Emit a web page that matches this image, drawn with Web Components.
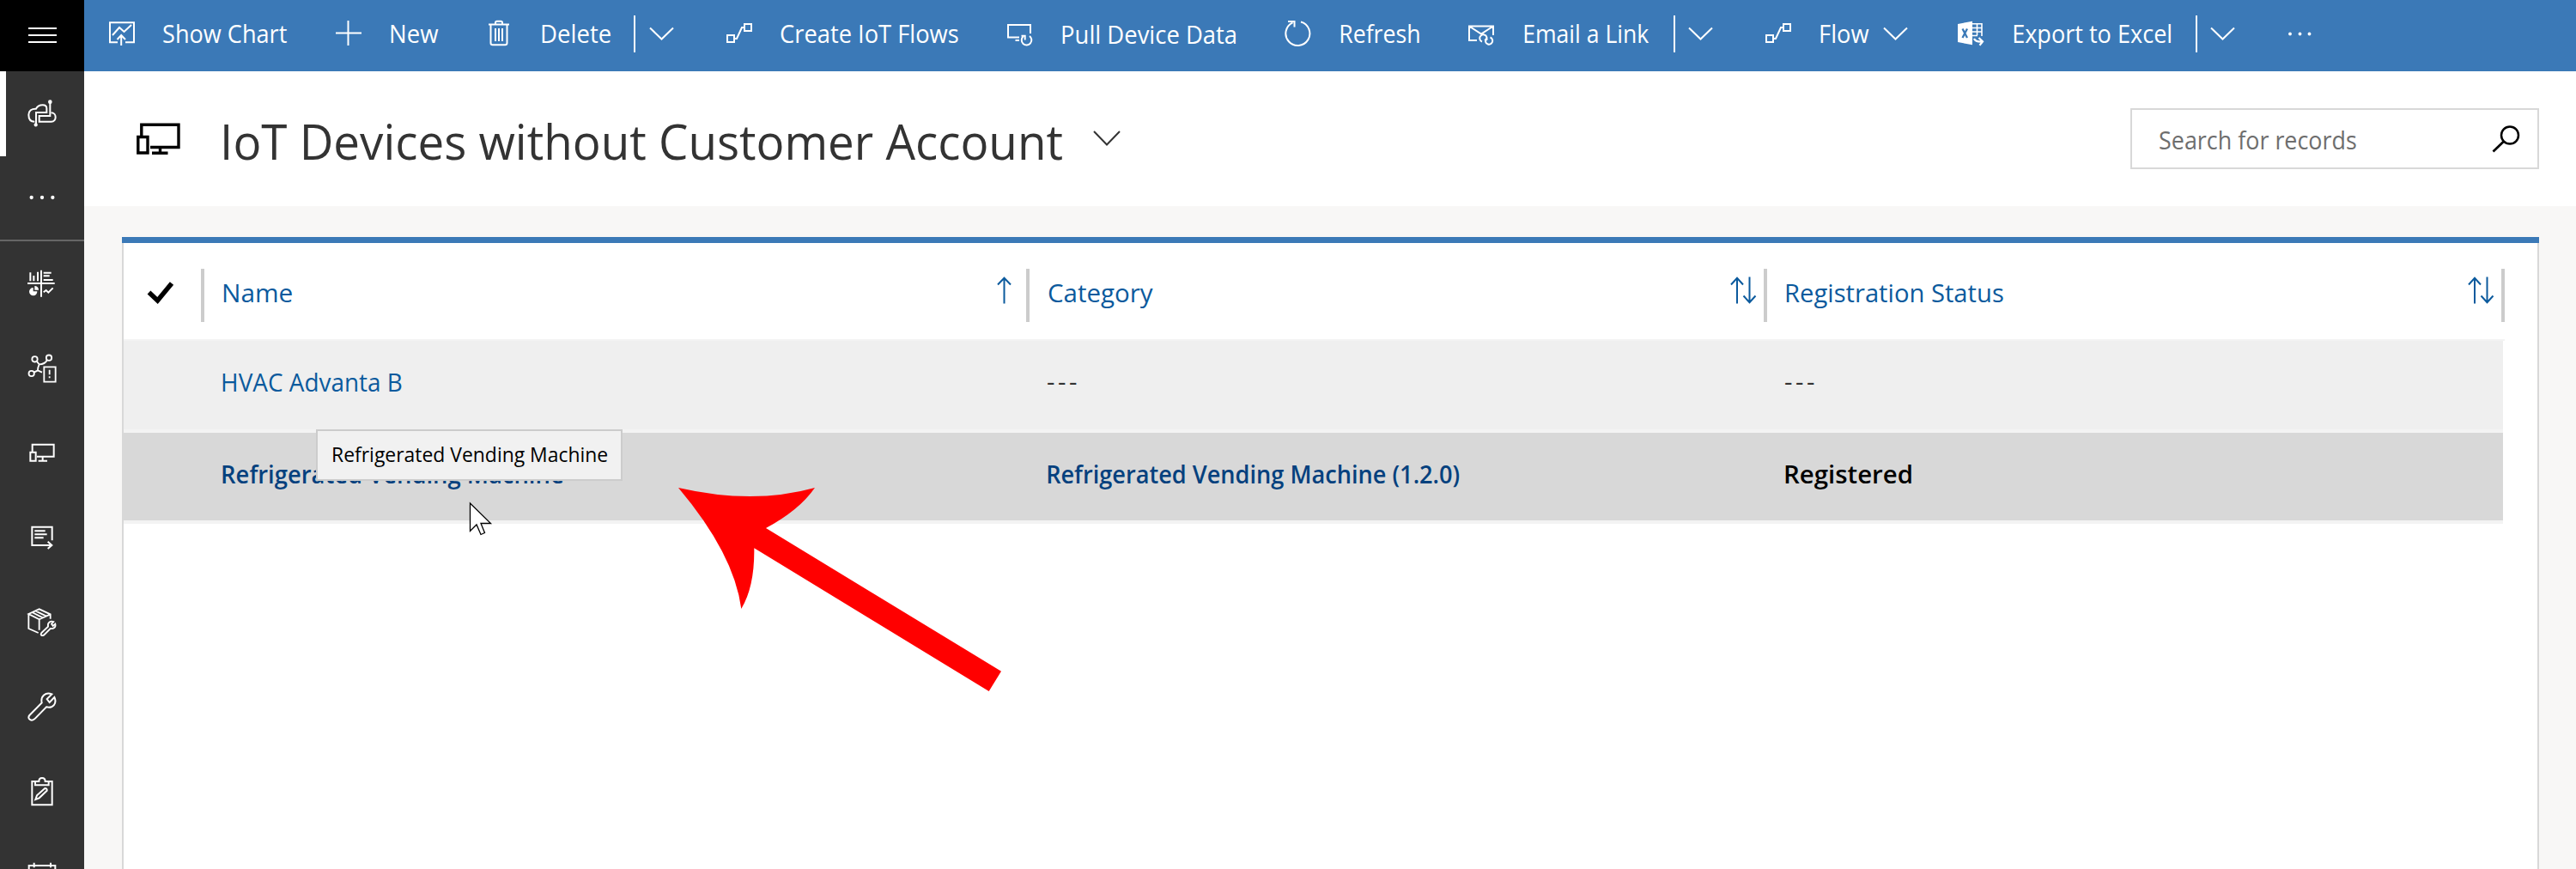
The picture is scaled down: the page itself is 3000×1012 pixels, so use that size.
<!DOCTYPE html>
<html lang="en">
<head>
<meta charset="utf-8">
<title>IoT Devices</title>
<style>
html,body{margin:0;height:1012px;overflow:hidden}
body{font-family:"Open Sans","Noto Sans",sans-serif;color:#333}
</style>
</head>
<body>
<app-shell>
  <nav-rail slot="nav"></nav-rail>
  <command-bar slot="commands"></command-bar>
  <view-header slot="header"></view-header>
  <record-grid slot="grid"></record-grid>
  <callout-layer slot="overlay"></callout-layer>
</app-shell>
<script>
const define = (name, markup, after) => customElements.define(name, class extends HTMLElement {
  connectedCallback() {
    if (this.shadowRoot) return;
    this.attachShadow({mode: 'open'}).innerHTML = typeof markup === 'function' ? markup(this) : markup;
    if (after) after(this);
  }
});

/* Label whose visible glyphs span exactly the width given in "w". */
const ctx = document.createElement('canvas').getContext('2d');
define('fit-text', el => `<style>
  :host{display:block;flex:none;width:${el.getAttribute('w')}px;white-space:nowrap}
  span{display:inline-block;transform-origin:0 50%}
  </style><span><slot></slot></span>`, el => {
  const cs = getComputedStyle(el);
  ctx.font = `${cs.fontWeight} ${cs.fontSize} ${cs.fontFamily}`;
  ctx.letterSpacing = cs.letterSpacing === 'normal' ? '0px' : cs.letterSpacing;
  const m = ctx.measureText(el.textContent.trim());
  const s = +el.getAttribute('w') / (m.actualBoundingBoxRight + m.actualBoundingBoxLeft);
  el.shadowRoot.querySelector('span').style.transform =
    `translateX(${m.actualBoundingBoxLeft * s + 1}px) scaleX(${s})`;
});

const FLOW = '<path d="M1 41h8v8h-8zM21 28h8v8h-8zM9 45h3l6-13h3"/>';
const ICONS = {
  menu: ['33 26 34 28', 34, 28, '<path d="M33 32h33M33 40h33M33 48h33"/>'],
  chart: ['0 0 30 83', 30, 83, '<path d="M10 49.2H1V26.2h28v23H19M4 41l8-9 5.500 5L26 29M14.200 53V42M9.500 46l4.700-5 4.800 5"/>'],
  plus: ['0 0 30 83', 30, 83, '<path d="M0 38.500h30M14.500 24v29"/>'],
  trash: ['0 0 24 83', 24, 83, '<path d="M0 28.500h24M2.500 28.500V50q0 2.200 2.200 2.200h14.600q2.200 0 2.200-2.200V28.500M8 28v-1.500q0-1.700 1.700-1.700h4.600q1.700 0 1.700 1.700V28M8 33v15M12 33v15M16 33v15"/>'],
  chev: ['0 0 29 83', 29, 83, '<path d="M1 32.500l13.500 13L28 32.500"/>'],
  flow: ['0 0 30 83', 30, 83, FLOW],
  pull: ['0 0 31 83', 31, 83, '<path d="M27 39V29H1v14.500h13M9.500 47h4.500M18.500 42.500a5.800 5.800 0 1 0 7.500 -.5M16.500 41.800h4.200v4.800"/>'],
  refresh: ['0 0 31 83', 31, 83, '<path d="M9.500 26.300a14 14 0 1 0 9.500-.800M4 25h7.500v6.500"/>'],
  mail: ['0 0 31 83', 31, 83, '<path d="M10 47H1V30.500h28V41M1 30.500l14 9 14-9M16 48.500A4.200 4.200 0 1 1 21.500 43.500Q21.500 46 19 47M25.500 43.500A4.200 4.200 0 1 1 20 48.500Q20 46 22.500 45"/>'],
  excel: ['0 0 31 83', 31, 83, '<path fill="#fff" stroke="none" d="M0 28l17-3.200v27.500L0 49z"/><path stroke="#3b79b7" stroke-width="2.300" d="M5.500 33.500l5.500 10.500M11 33.500L5.500 44"/><path stroke-width="1.600" d="M17 27.800h11V42M17 32.500h11M17 37h11M17 41.500h6M22.500 28v13"/><path stroke-width="2.200" d="M19 45q1.500 4 10 3.500M24.500 44l4.500 4.400-3.500 4.300"/>'],
  dots: ['0 0 27 83', 27, 83, '<g fill="#fff" stroke="none"><circle cx="2" cy="39.500" r="1.900"/><circle cx="13.500" cy="39.500" r="1.900"/><circle cx="24.500" cy="39.500" r="1.900"/></g>'],
  iot: ['94 101 108 108', 36, 36, '<path d="M122 184C105 184 101 172 101 160C101 146 112 138 127 139C132 129 140 126 150 126C160 126 164 132 164 138V152H127V195M176 115V164H138V184H180C200 184 200 153 180 153"/><circle cx="176" cy="115" r="4" fill="#fff"/><circle cx="126" cy="195" r="3.500" fill="#fff"/>'],
  more: ['94 397 108 108', 36, 36, '<g fill="#fff" stroke="none"><circle cx="111" cy="451" r="6.500"/><circle cx="148" cy="451" r="6.500"/><circle cx="185" cy="451" r="6.500"/></g>'],
  dash: ['94 694 108 108', 36, 36, '<path d="M145 702V795M97 748H192M107 710V740M119 721V740M133 708V740M153 711H180M153 722H174M153 736H186M153 779L162 772L170 780L186 764"/><path fill="#fff" stroke="none" d="M117 763V776H131A14 14 0 1 1 117 763ZM122 757A14 14 0 0 1 136 771H122Z"/>'],
  alert: ['94 994 108 108', 36, 36, '<g stroke-width="5.500"><circle cx="122.500" cy="1016" r="9.500"/><circle cx="172" cy="1011" r="9.500"/><circle cx="111" cy="1066" r="9.500"/><path d="M129 1023L138 1034Q158 1034 166 1018M138 1034Q133 1044 133 1055L120 1062M133 1055L148 1062"/><path d="M155 1043H195V1095H155Z"/><path d="M174 1053V1070M174 1076V1082"/></g>'],
  device: ['94 1288 108 108', 36, 36, '<path d="M114 1338V1314H189V1356H130M107 1341H126V1371H107ZM150 1357V1370M135 1371H166"/>'],
  doc: ['94 206 108 108', 36, 36, '<path d="M183 270V223H113V287H180M168 274L182 287L168 299M122 237H159M122 249H165M122 261H153"/>'],
  box: ['94 500 108 108', 36, 36, '<path stroke-width="5.500" d="M177 541V525L138 507L101 524L138 543L177 525M101 524V575L135 590M138 543V580M113 518L150 537M125 513L163 532M146 590L169 568C166 553 178 547 188 551L181 559L186 566L194 559C197 570 188 577 177 575L154 598C147 602 141 597 146 590Z"/>'],
  wrench: ['94 794 108 108', 36, 36, '<path d="M104 878L147 834C142 812 160 795 182 804L165 821L174 833L191 815C201 836 186 855 163 849L124 889C111 902 94 890 104 878Z"/>'],
  clip: ['94 1091 108 108', 36, 36, '<path d="M124 1109H113V1191H183V1109H172M124 1109V1122H171V1109H159C159 1093 137 1093 137 1109ZM125 1172L130 1158L158 1133Q166 1133 165 1141L138 1167Z"/>'],
  cal: ['94 1382 108 108', 36, 36, '<path d="M102 1400H194V1480H102ZM102 1417H194M120 1390V1407M178 1390V1407"/>'],
  screen: ['158 140 56 44', 56, 44, '<path stroke="#000" stroke-width="3.400" d="M164.800 159V145.200H208V171.500H175M160.800 159.500H172V178H160.800ZM186.500 172V178M177 178.300H195.500"/>'],
  titlechev: ['0 0 32 20', 32, 20, '<path stroke="#333" d="M1 2l15 15.500L31 2"/>'],
  search: ['0 0 34 32', 34, 32, '<circle cx="21" cy="11.500" r="10" stroke="#000" stroke-width="2.500"/><path stroke="#000" stroke-width="2.700" d="M14 18.500L1.500 30.500"/>'],
  check: ['0 0 32 28', 32, 28, '<path stroke="#000" stroke-width="5.500" d="M2.500 13.500L12.500 23L29 3"/>'],
  asc: ['0 0 17 32', 17, 32, '<path stroke="#0b5a9d" d="M8.500 31.500V2M1 9.500L8.500 1.800L16 9.500"/>'],
  sort: ['0 0 31 32', 31, 32, '<path stroke="#0b5a9d" d="M8 31.500V2M1 9.500L8 1.800L15 9.500M22.500 .5V30M15.500 22.500L22.500 30.200L29.500 22.500"/>']
};
define('ui-icon', el => {
  const [box, w, h, body] = ICONS[el.getAttribute('name')];
  const sw = w === 36 ? 6 : 2;
  return `<style>:host{display:block;flex:none;width:${w}px;height:${h}px}svg{display:block}</style>
  <svg width="${w}" height="${h}" viewBox="${box}" fill="none" stroke="#fff" stroke-width="${sw}">${body}</svg>`;
});

define('app-shell', `<style>
  :host{display:flex;width:3000px;height:1012px;background:#f8f7f6;overflow:hidden;position:relative}
  main{display:flex;flex-direction:column;flex:1;min-width:0}
  </style><slot name="nav"></slot>
  <main><slot name="commands"></slot><slot name="header"></slot><slot name="grid"></slot></main>
  <slot name="overlay"></slot>`);

define('nav-rail', `<style>
  :host{display:flex;flex-direction:column;flex:none;width:98px;height:1012px;background:#333;overflow:hidden}
  div{flex:none;box-sizing:border-box;height:98.6px;display:flex;align-items:center;padding-left:31.300px}
  .menu{height:83px;background:#000;padding:0 0 2px 33px}
  .on{border-left:7px solid #fff;padding-left:24.300px}
  .sep{height:99.400px;border-bottom:2px solid #666}
  </style>
  <div class="menu"><ui-icon name="menu"></ui-icon></div>
  <div class="on"><ui-icon name="iot"></ui-icon></div>
  <div class="sep"><ui-icon name="more"></ui-icon></div>
  ${['dash','alert','device','doc','box','wrench','clip','cal'].map(n => `<div><ui-icon name="${n}"></ui-icon></div>`).join('')}`);

const COMMANDS = [
  ['i',29,'chart'],['t',32,144,'Show Chart'],['i',58,'plus'],['t',33,56,'New'],['i',59,'trash'],['t',37,80,'Delete'],
  ['d',28],['i',16,'chev'],['i',61,'flow'],['t',32,207,'Create IoT Flows'],['i',58,'pull'],['t',32,202,'Pull Device Data'],
  ['i',58,'refresh'],['t',33,92,'Refresh'],['i',58,'mail'],['t',33,146,'Email a Link'],['d',29],['i',15,'chev'],
  ['i',61,'flow'],['t',33,57,'Flow'],['i',17,'chev'],['i',58,'excel'],['t',33,183,'Export to Excel'],
  ['d',30],['i',15,'chev'],['i',62,'dots']
];
define('command-bar', `<style>
  :host{display:flex;flex:none;height:83px;background:#3b79b7;color:#fff;font-size:29px;line-height:77px}
  i{flex:none;width:2px;height:43px;margin-top:18px;background:#fff}
  .low{padding-top:1px}
  </style>${COMMANDS.map(([k, gap, a, b]) => {
    const m = `style="margin-left:${gap}px"`;
    return k === 'i' ? `<ui-icon ${m} name="${a}"></ui-icon>` : k === 'd' ? `<i ${m}></i>` : `<fit-text ${m} ${b[0] === 'P' ? 'class="low"' : ''} w="${a}">${b}</fit-text>`;
  }).join('')}`);

define('view-header', `<style>
  :host{display:flex;flex:none;box-sizing:border-box;height:157px;background:#fff;padding:0 43px 0 60px;align-items:center}
  .title{font-size:56px;line-height:80px;margin:4px 37px 0 46px}
  .chev{margin-bottom:1px}
  .search{margin-left:auto;display:flex;align-items:center;box-sizing:border-box;width:476px;height:71px;border:2px solid #d8d8d8;padding:0 19px 0 31px;color:#6e6e6e;font-size:29px;line-height:67px}
  .search fit-text{padding-top:1px}
  .search ui-icon{margin-left:auto}
  </style>
  <ui-icon name="screen"></ui-icon>
  <fit-text class="title" w="976">IoT Devices without Customer Account</fit-text>
  <ui-icon class="chev" name="titlechev"></ui-icon>
  <div class="search"><fit-text w="229">Search for records</fit-text><ui-icon name="search"></ui-icon></div>`);

define('record-grid', `<style>
  :host{display:block;flex:1;box-sizing:border-box;margin:36px 43px 0 44px;background:#fff;border:solid #d8d8d8;border-width:0 2px;font-size:29px}
  .top{height:7px;margin:0 -2px;background:#3b79b7}
  .head,.row{display:grid;width:2773px;grid-template-columns:94px 961px 859px 859px}
  .head{height:112px;color:#0b5a9d;border-bottom:2px solid #f3f3f3}
  .head>div{display:flex;height:62px;margin-top:30px;box-sizing:border-box;border-right:4px solid #ccc;padding-right:8px;align-items:center}
  .head>.c{padding:0;justify-content:flex-start}
  .c ui-icon{margin:-6px 0 0 27px}
  .head fit-text{line-height:40px;margin:-7px 0 0 21px}
  .head div:not(.c) ui-icon{margin:-13px 0 0 auto}
  .head .a{padding-right:17px}
  .row{width:2771px;height:103px;background:#efefef;border-bottom:4px solid #f3f3f3;line-height:40px}
  .row fit-text{margin:28px 0 0 20px}
  .row .l{color:#0b5a9d}
  .row .none{letter-spacing:3.500px;margin-top:27px}
  .sel{height:102px;background:#d8d8d8;color:#000;font-weight:600}
  .sel .l{color:#05417e}
  </style>
  <div class="top"></div>
  <div class="head">
    <div class="c"><ui-icon name="check"></ui-icon></div>
    <div class="a"><fit-text w="80">Name</fit-text><ui-icon name="asc"></ui-icon></div>
    <div><fit-text w="122">Category</fit-text><ui-icon name="sort"></ui-icon></div>
    <div><fit-text w="253">Registration Status</fit-text><ui-icon name="sort"></ui-icon></div>
  </div>
  <div class="row"><span></span><fit-text class="l" w="209">HVAC Advanta B</fit-text><fit-text class="none" w="34">---</fit-text><fit-text class="none" w="34">---</fit-text></div>
  <div class="row sel"><span></span><fit-text class="l" w="397">Refrigerated Vending Machine</fit-text><fit-text class="l" w="480">Refrigerated Vending Machine (1.2.0)</fit-text><fit-text w="147">Registered</fit-text></div>`);

define('callout-layer', `<style>
  :host{position:absolute;inset:0;pointer-events:none}
  .tip{position:absolute;left:368px;top:500px;width:357px;height:60px;box-sizing:border-box;border:2px solid #ccc;background:#f1f1f1;color:#000;font-size:23.500px;line-height:55px;padding-left:17px}
  svg{position:absolute;inset:0}
  </style>
  <div class="tip"><fit-text w="319">Refrigerated Vending Machine</fit-text></div>
  <svg width="3000" height="1012" viewBox="0 0 3000 1012">
    <path fill="#fff" stroke="#000" stroke-width="1.300" d="M547.500 586V618.500L555 611L560 622.500L564.500 620.500L560 609.500H571.500Z"/>
    <path fill="#f00" d="M790 568Q877 588 949 568Q931 594 892 615L1166 781.700L1151.700 805L878.300 638.300Q879 683 863.300 709Q855 645 790 568Z"/>
  </svg>`);
</script>
</body>
</html>
